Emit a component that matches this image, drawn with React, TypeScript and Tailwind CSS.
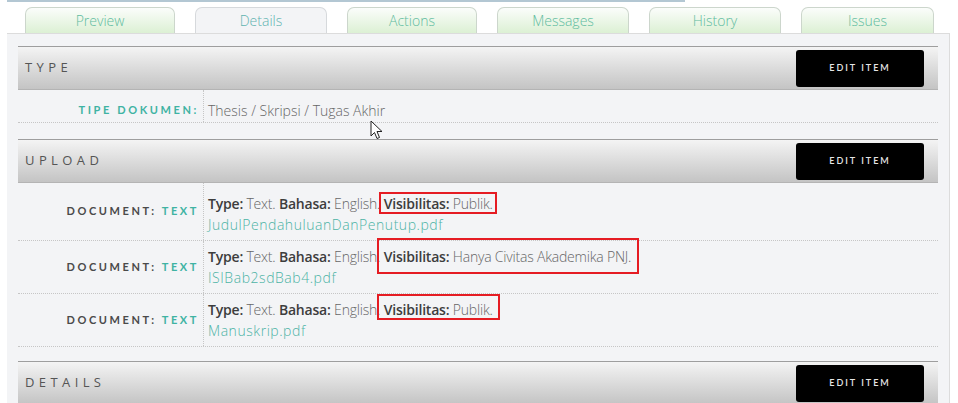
import React from "react";

const tabs = [
  { name: "Preview", w: 150, active: false },
  { name: "Details", w: 132, active: true },
  { name: "Actions", w: 130, active: false },
  { name: "Messages", w: 132, active: false },
  { name: "History", w: 132, active: false },
  { name: "Issues", w: 133, active: false },
];

function Header({ title }: { title: string }) {
  return (
    <div className="h-[44px] flex items-center justify-between border-t border-b border-t-[#9e9e9e] border-b-[#b4b4b4] bg-linear-to-b from-[#f4f4f4] to-[#c4c4c4] pl-[7px] pr-[14px]">
      <span className="text-[13px] tracking-[4.4px] text-[#555] font-['Open_Sans',sans-serif] font-normal">{title}</span>
      <div className="w-[128px] h-[37px] bg-black rounded-[3px] flex items-center justify-center text-[9px] tracking-[2px] text-[#e6e6e6] font-['Lato',sans-serif] font-semibold">
        EDIT ITEM
      </div>
    </div>
  );
}

type Box = { l: number; r: number; t: number; b: number };

function DocRow({
  vis,
  file,
  box,
  pt,
}: {
  vis: string;
  file: string;
  box: Box;
  pt: string;
}) {
  return (
    <div className="flex border-b border-dotted border-[#c6c6c6]">
      <div className="w-[185px] flex items-center justify-end pr-[6px] text-[11px] font-bold tracking-[2.6px] font-['Lato',sans-serif]">
        <span className="text-[#4a4a4a]">DOCUMENT:</span>
        <span className="text-[#3fb3a3] ml-[5px] mr-[-2px]">TEXT</span>
      </div>
      <div className={`flex-1 border-l border-dotted border-[#c6c6c6] pl-[4px] ${pt} pb-[5px] text-[14px] leading-[21px] font-['Open_Sans',sans-serif] font-light`}>
        <div className="text-[#666] whitespace-nowrap tracking-[-0.2px]">
          <b className="text-[#3d3d3d] font-semibold">Type:</b> Text. <b className="text-[#3d3d3d] font-semibold">Bahasa:</b> English.{" "}
          <span className="relative">
            <b className="text-[#3d3d3d] font-semibold">Visibilitas:</b> {vis}
            <span
              className="absolute border-[2.5px] border-[#e51c23]"
              style={{ left: -box.l, right: -box.r, top: -box.t, bottom: -box.b }}
            />
          </span>
        </div>
        <div className="text-[#4cb3a5] tracking-[0.55px]">{file}</div>
      </div>
    </div>
  );
}

export default function App() {
  return (
    <div className="w-[958px] h-[403px] bg-white overflow-hidden relative font-['Open_Sans',sans-serif]">
      <div className="ml-[7px] w-[678px] h-[2px] bg-[#b3c7d3]" />
      <div className="mt-[5px] h-[26px] flex gap-[20px] pl-[25px]">
        {tabs.map((t) => (
          <div
            key={t.name}
            style={{ width: t.w }}
            className={
              t.active
                ? "h-[26px] rounded-t-[7px] border border-b-0 border-[#d6d9dc] bg-[#f3f4f6] flex items-center justify-center text-[14px] font-light text-[#5fb3b0] relative z-10"
                : "h-[26px] rounded-t-[7px] border border-b-0 border-[#ccd6cc] bg-linear-to-b from-[#fbfdfb] to-[#dcf0d4] flex items-center justify-center text-[14px] font-light text-[#5fbca0]"
            }
          >
            {t.name}
          </div>
        ))}
      </div>
      <div className="ml-[7px] w-[943px] h-[400px] bg-[#f3f4f6] border-t border-r border-[#dcdcdc] pt-[12px] px-[11px]">
        <Header title="TYPE" />
        <div className="flex border-b border-dotted border-[#c6c6c6]">
          <div className="w-[185px] flex items-center justify-end pr-[6px] pt-[9px] text-[11px] font-bold tracking-[2.6px] text-[#3fb3a3] font-['Lato',sans-serif]">
            <span className="mr-[-2px]">TIPE DOKUMEN:</span>
          </div>
          <div className="flex-1 border-l border-dotted border-[#c6c6c6] pl-[4px] pt-[10px] pb-[1px] text-[14px] leading-[21px] text-[#666] font-light">
            Thesis / Skripsi / Tugas Akhir
          </div>
        </div>
        <div className="mt-[16px]">
          <Header title="UPLOAD" />
        </div>
        <DocRow
          vis="Publik."
          file="JudulPendahuluanDanPenutup.pdf"
          box={{ l: 5, r: 4, t: 2, b: 1 }}
          pt="pt-[10px]"
        />
        <DocRow
          vis="Hanya Civitas Akademika PNJ."
          file="ISIBab2sdBab4.pdf"
          box={{ l: 7, r: 8, t: 9, b: 8 }}
          pt="pt-[5px]"
        />
        <DocRow
          vis="Publik."
          file="Manuskrip.pdf"
          box={{ l: 7, r: 7, t: 6, b: 1 }}
          pt="pt-[5px]"
        />
        <div className="mt-[14px]">
          <Header title="DETAILS" />
        </div>
      </div>
      <svg
        className="absolute left-[370px] top-[120px]"
        width="14"
        height="20"
        viewBox="0 0 14 20"
      >
        <path
          d="M1 1 L1 16 L4.5 12.5 L7 18.5 L9.5 17.5 L7 11.5 L12 11.5 Z"
          fill="#fff"
          stroke="#222"
          strokeWidth="1"
          strokeLinejoin="round"
        />
      </svg>
    </div>
  );
}
